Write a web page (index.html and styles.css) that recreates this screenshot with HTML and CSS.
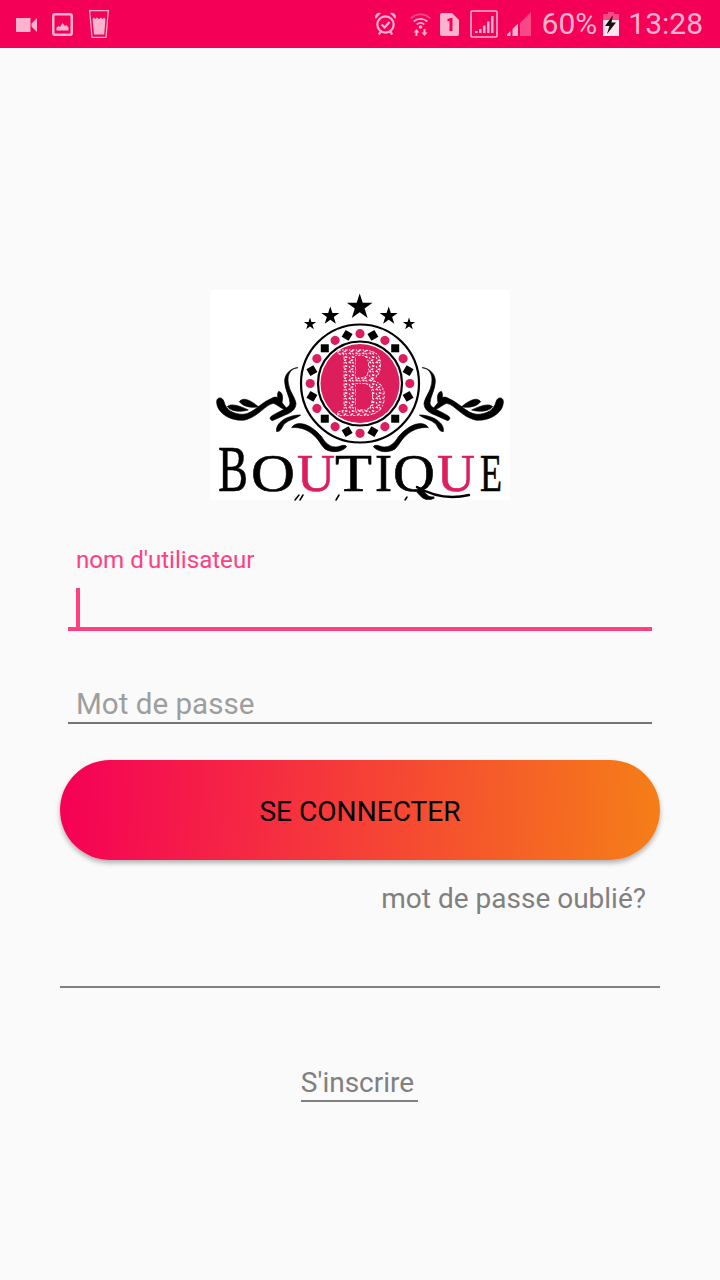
FILE: index.html
```html
<!DOCTYPE html>
<html lang="fr">
<head>
<meta charset="utf-8">
<title>Boutique</title>
<link rel="stylesheet" href="styles.css">
</head>
<body>
<header class="status">
  <div class="status-left">
    <svg class="i-video" viewBox="0 0 21 14"><path d="M0 0h14.500v14H0zM15.500 5.500 21 0v14l-5.500-5.500z"/></svg>
    <svg class="i-image" viewBox="0 0 21 23"><path fill-rule="evenodd" d="M3 0h15a3 3 0 0 1 3 3v17a3 3 0 0 1-3 3H3a3 3 0 0 1-3-3V3a3 3 0 0 1 3-3zm0 2.500a.5.5 0 0 0-.5.5v17a.5.5 0 0 0 .5.5h15a.5.5 0 0 0 .5-.5V3a.5.5 0 0 0-.5-.5z"/><path d="M4.500 17.500v-3l2-1.500 1.500 1 2.500-4 2.500 3 1.500-1 2 2.500v3z"/></svg>
    <svg class="i-glass" viewBox="0 0 20 28"><path d="M.7.7h18.600l-2.300 26.600H3z" fill="none" stroke-width="1.200"/><path d="M3.500 9l1.500-1.500 1.500 1.500 1.500-1.500 2 1.500 2-1.500 1.500 1.500 1.500-1.500 1.500 1.500-1.300 15.500H5z"/></svg>
  </div>
  <div class="status-right">
    <svg class="i-alarm" viewBox="0 0 21 24"><g fill="none" stroke-width="2.200"><circle cx="10.500" cy="12.500" r="8.200"/><path d="M6.700 12.500l3 3 4.800-5.500M3.800 22.500l2-2.800M17.200 22.500l-2-2.800"/></g><path d="M0 5.500C0 2 3 0 6 1L.9 6.800zM21 5.500C21 2 18 0 15 1l5.100 5.800z"/></svg>
    <svg class="i-wifi" viewBox="0 0 21 24"><g fill="none" stroke-width="1.800"><path class="dim" d="M.7 6.500C6 1 15 1 20.300 6.500"/><path d="M3.700 9.500c4-3.500 9.600-3.500 13.600 0M6.700 12.500c2.300-2 5.300-2 7.600 0"/></g><circle cx="10.500" cy="15" r="1.800"/><path d="M6.500 17l-3 3.500h2V24h2v-3.500h2zM14.500 24l3-3.500h-2V17h-2v3.500h-2z"/></svg>
    <svg class="i-sim" viewBox="0 0 19 23"><path fill-rule="evenodd" d="M2 0h10l7 7v14a2 2 0 0 1-2 2H2a2 2 0 0 1-2-2V2a2 2 0 0 1 2-2zm5.500 6v2.500l2-.7V18h3V5h-1.800z"/></svg>
    <svg class="i-box" viewBox="0 0 28 28"><rect x="1" y="1" width="26" height="26" rx="1" fill="none" stroke-width="1.600"/><path d="M5 21h2.500v2H5zM9 19h2.500v4H9zM13 15.500h2.500V23H13zM17 11.500h2.500V23H17zM21 6h2.500v17H21z"/></svg>
    <svg class="i-cell" viewBox="0 0 24 24"><path class="dim" d="M24 0v24H13V11z"/><path d="M0 24v-1.500L3.500 19V24zM5.500 24v-7l5.500-5.500V24z"/></svg>
    <span class="pct">60%</span>
    <svg class="i-batt" viewBox="0 0 16 24"><path class="dim" d="M5 0h6v2h5v6H0V2h5z"/><path d="M0 8h16v16H0z" fill="#ffe4ee"/><path class="bolt" d="M10 3 2 14h4.500L4 22l9-11.500H8.500z"/></svg>
    <span class="time">13:28</span>
  </div>
</header>

<main class="page">
  <svg class="logo" viewBox="0 0 300 210" role="img" aria-label="Boutique">
    <defs>
      <path id="star" d="M0-1 .2245-.309H.951L.363.118.588.809 0 .382-.588.809-.363.118-.951-.309H-.2245z"/>
      <circle id="bead" cx="150" cy="43.700" r="4.600" class="pink"/>
      <rect id="dia" x="146" y="39.700" width="8" height="8" transform="rotate(45 150 43.700)"/>
      <pattern id="speck" width="9" height="9" patternUnits="userSpaceOnUse">
        <rect width="9" height="9" fill="#dc1f5c"/>
        <path d="M1 2c1-1.500 2.500-1.500 2.500.5M5.500 1l2 1.500M8 4.500c-1 1.300-2.500 1.300-2.500-.5M1.500 5l1 2M3.500 8c1.300.8 2.500.4 3-.8" fill="none" stroke="#fff" stroke-width="1.300"/>
      </pattern>
      <g id="scroll" class="scroll" transform="translate(0 65) scale(.3333)">
        <path d="M20 140C20 125 38 125 42 140C48 165 70 178 100 178C130 175 150 145 185 130C195 125 200 125 205 130C215 140 220 150 235 165C215 165 205 150 190 145C165 150 145 185 105 195C65 200 20 175 20 140Z"/>
        <path d="M52 155C60 145 85 150 115 165C90 172 65 170 52 155Z"/>
        <path d="M88 140C100 125 120 135 145 155C125 160 100 155 88 140Z"/>
        <path d="M205 110C215 108 222 125 215 145C208 140 198 125 205 110Z"/>
        <path d="M264 38C245 40 230 55 235 85C238 110 255 125 258 145C258 165 240 175 225 180L187 197C176 192 180 185 190 180C215 165 238 160 240 145C240 125 224 105 224 78C224 55 245 38 264 38Z"/>
        <path d="M200 230C195 205 230 180 272 180C262 190 235 195 225 205C215 215 215 230 200 230Z"/>
        <path d="M245 218C260 195 300 205 335 245C345 262 360 280 385 275C395 272 405 268 410 275C395 292 365 295 345 282C335 272 330 262 322 252C300 225 270 215 245 218Z"/>
      </g>
    </defs>
    <rect class="paper" width="300" height="210"/>
    <use href="#star" transform="translate(149.700 17) scale(13.500)"/>
    <use href="#star" transform="translate(120.300 26) scale(9.500)"/>
    <use href="#star" transform="translate(178.700 26) scale(9.500)"/>
    <use href="#star" transform="translate(100 34) scale(6.500)"/>
    <use href="#star" transform="translate(199 34) scale(6.500)"/>
    <use href="#scroll"/>
    <use href="#scroll" transform="matrix(-1 0 0 1 300 0)"/>
    <circle cx="150" cy="93.500" r="59" class="ring disc"/>
    <circle cx="150" cy="93.500" r="42" class="ring"/>
    <circle cx="150" cy="93.500" r="39.500" class="pink"/>
    <text transform="matrix(.75 0 0 1 151.500 125)" class="mono">B</text>
    <use href="#bead"/><use href="#dia" transform="rotate(15 150 93.500)"/>
    <use href="#bead" transform="rotate(30 150 93.500)"/><use href="#dia" transform="rotate(45 150 93.500)"/>
    <use href="#bead" transform="rotate(60 150 93.500)"/><use href="#dia" transform="rotate(75 150 93.500)"/>
    <use href="#bead" transform="rotate(90 150 93.500)"/><use href="#dia" transform="rotate(105 150 93.500)"/>
    <use href="#bead" transform="rotate(120 150 93.500)"/><use href="#dia" transform="rotate(135 150 93.500)"/>
    <use href="#bead" transform="rotate(150 150 93.500)"/><use href="#dia" transform="rotate(165 150 93.500)"/>
    <use href="#bead" transform="rotate(180 150 93.500)"/><use href="#dia" transform="rotate(195 150 93.500)"/>
    <use href="#bead" transform="rotate(210 150 93.500)"/><use href="#dia" transform="rotate(225 150 93.500)"/>
    <use href="#bead" transform="rotate(240 150 93.500)"/><use href="#dia" transform="rotate(255 150 93.500)"/>
    <use href="#bead" transform="rotate(270 150 93.500)"/><use href="#dia" transform="rotate(285 150 93.500)"/>
    <use href="#bead" transform="rotate(300 150 93.500)"/><use href="#dia" transform="rotate(315 150 93.500)"/>
    <use href="#bead" transform="rotate(330 150 93.500)"/><use href="#dia" transform="rotate(345 150 93.500)"/>
    <text y="201" class="brand"><tspan x="8" class="cap" textLength="30" lengthAdjust="spacingAndGlyphs">B</tspan><tspan x="41" textLength="44" lengthAdjust="spacingAndGlyphs">O</tspan><tspan x="87" class="u" textLength="38" lengthAdjust="spacingAndGlyphs">U</tspan><tspan x="125" textLength="37" lengthAdjust="spacingAndGlyphs">T</tspan><tspan x="165" textLength="17" lengthAdjust="spacingAndGlyphs">I</tspan><tspan x="183" textLength="42" lengthAdjust="spacingAndGlyphs">Q</tspan><tspan x="227" class="u" textLength="38" lengthAdjust="spacingAndGlyphs">U</tspan><tspan x="270" textLength="22" lengthAdjust="spacingAndGlyphs">E</tspan></text>
    <path class="tail" d="M207 197c12 7 30 13 52 8"/>
    <path class="tail thin" d="M85 210l4-5M90 210l3-5M126 210l3-5M195 210l2-3"/>
  </svg>

  <div class="field field-active">
    <label class="float-label">nom d'utilisateur</label>
    <div class="input-line"><span class="caret"></span></div>
  </div>

  <div class="field field-idle">
    <div class="placeholder">Mot de passe</div>
  </div>

  <button class="primary" type="button">SE CONNECTER</button>

  <a class="forgot">mot de passe oublié?</a>

  <hr class="divider">

  <div class="signup-row"><a class="signup">S'inscrire</a></div>
</main>
</body>
</html>
```
FILE: styles.css
```css
* { box-sizing: border-box; }
html, body { margin: 0; padding: 0; }
body {
  width: 720px;
  height: 1280px;
  overflow: hidden;
  background: #fafafa;
  font-family: Roboto, "Liberation Sans", sans-serif;
}

/* status bar */
.status {
  height: 48px;
  background: #f50057;
  display: flex;
  justify-content: space-between;
  align-items: center;
  color: #fdb3cd;
  fill: #fdb3cd;
  stroke: #fdb3cd;
}
.status svg { display: block; stroke: none; flex: none; }
.status svg g, .status svg [fill="none"] { stroke: #fdb3cd; }
.status .dim { opacity: .4; }
.status-left { display: flex; align-items: center; padding-left: 16px; }
.status-right { display: flex; align-items: center; padding-right: 17px; }
.i-video { width: 21px; height: 14px; margin-top: 1px; }
.i-image { width: 21px; height: 23px; margin-left: 15px; }
.i-glass { width: 20px; height: 28px; margin-left: 16px; }
.i-alarm { width: 21px; height: 24px; }
.i-wifi { width: 21px; height: 24px; margin-left: 14px; }
.i-sim { width: 19px; height: 23px; margin-left: 9px; }
.i-box { width: 28px; height: 28px; margin-left: 11px; }
.i-cell { width: 24px; height: 24px; margin-left: 9px; }
.i-batt { width: 16px; height: 24px; margin-left: 6px; }
.pct, .time { font-size: 30px; line-height: 48px; }
.pct { margin-left: 11px; }
.time { margin-left: 9px; }
.status .bolt { fill: #111; }

/* page */
.page {
  padding: 242px 60px 0;
  display: flex;
  flex-direction: column;
}
.logo { display: block; width: 300px; height: 210px; align-self: center; overflow: visible; }
.paper { fill: #fff; }
.pink { fill: #dc1f5c; }
.scroll { stroke: #000; stroke-width: 2; }
.ring { fill: none; stroke: #000; stroke-width: 2.200; }
.ring.disc { fill: #fff; }
.mono {
  font-family: "Liberation Serif", serif;
  font-size: 100px;
  font-weight: 700;
  text-anchor: middle;
  fill: url(#speck);
  stroke: #fff;
  stroke-width: .9;
  stroke-dasharray: 3 2 1.500 2.500;
}
.brand {
  font-family: "Liberation Serif", serif;
  font-size: 53px;
  fill: #000;
  stroke: #000;
  stroke-width: .6;
}
.brand .cap { font-size: 65px; }
.brand .u { fill: #dc1f5c; stroke: #dc1f5c; }
.tail { fill: none; stroke: #000; stroke-width: 2.500; stroke-linecap: round; }
.tail.thin { stroke-width: 1.500; }

/* fields */
.field { margin: 0 8px; }
.field-active { margin-top: 44px; }
.float-label {
  display: block;
  padding-left: 8px;
  font-size: 24.100px;
  line-height: 32px;
  color: #ff4081;
}
.input-line {
  height: 43px;
  margin-top: 12px;
  border-bottom: 4px solid #ff4081;
  padding-left: 8px;
}
.caret { display: block; width: 4px; height: 39px; background: #ff4081; }
.field-idle { margin-top: 48px; padding-top: 8px; border-bottom: 2px solid #757575; }
.placeholder {
  padding-left: 8px;
  font-size: 29.600px;
  line-height: 35px;
  color: #9e9e9e;
}

.primary {
  display: block;
  width: 600px;
  height: 100px;
  margin-top: 36px;
  padding: 3px 0 0;
  border: 0;
  border-radius: 50px;
  background: linear-gradient(93deg, #f50057 0%, #f57f17 100%);
  box-shadow: 0 3px 5px rgba(0, 0, 0, .3);
  font: 400 28.100px/97px Roboto, sans-serif;
  color: #000;
}

.forgot {
  display: block;
  margin-top: 19px;
  padding-right: 14px;
  text-align: right;
  font-size: 28px;
  line-height: 40px;
  color: #808080;
}

.divider {
  margin: 67px 0 0;
  height: 2px;
  border: 0;
  background: #808080;
}

.signup-row { margin-top: 77px; display: flex; justify-content: center; padding-right: 1px; }
.signup {
  padding: 0 4px 0 0;
  font-size: 28px;
  line-height: 35px;
  color: #808080;
  border-bottom: 2px solid #808080;
}
```
